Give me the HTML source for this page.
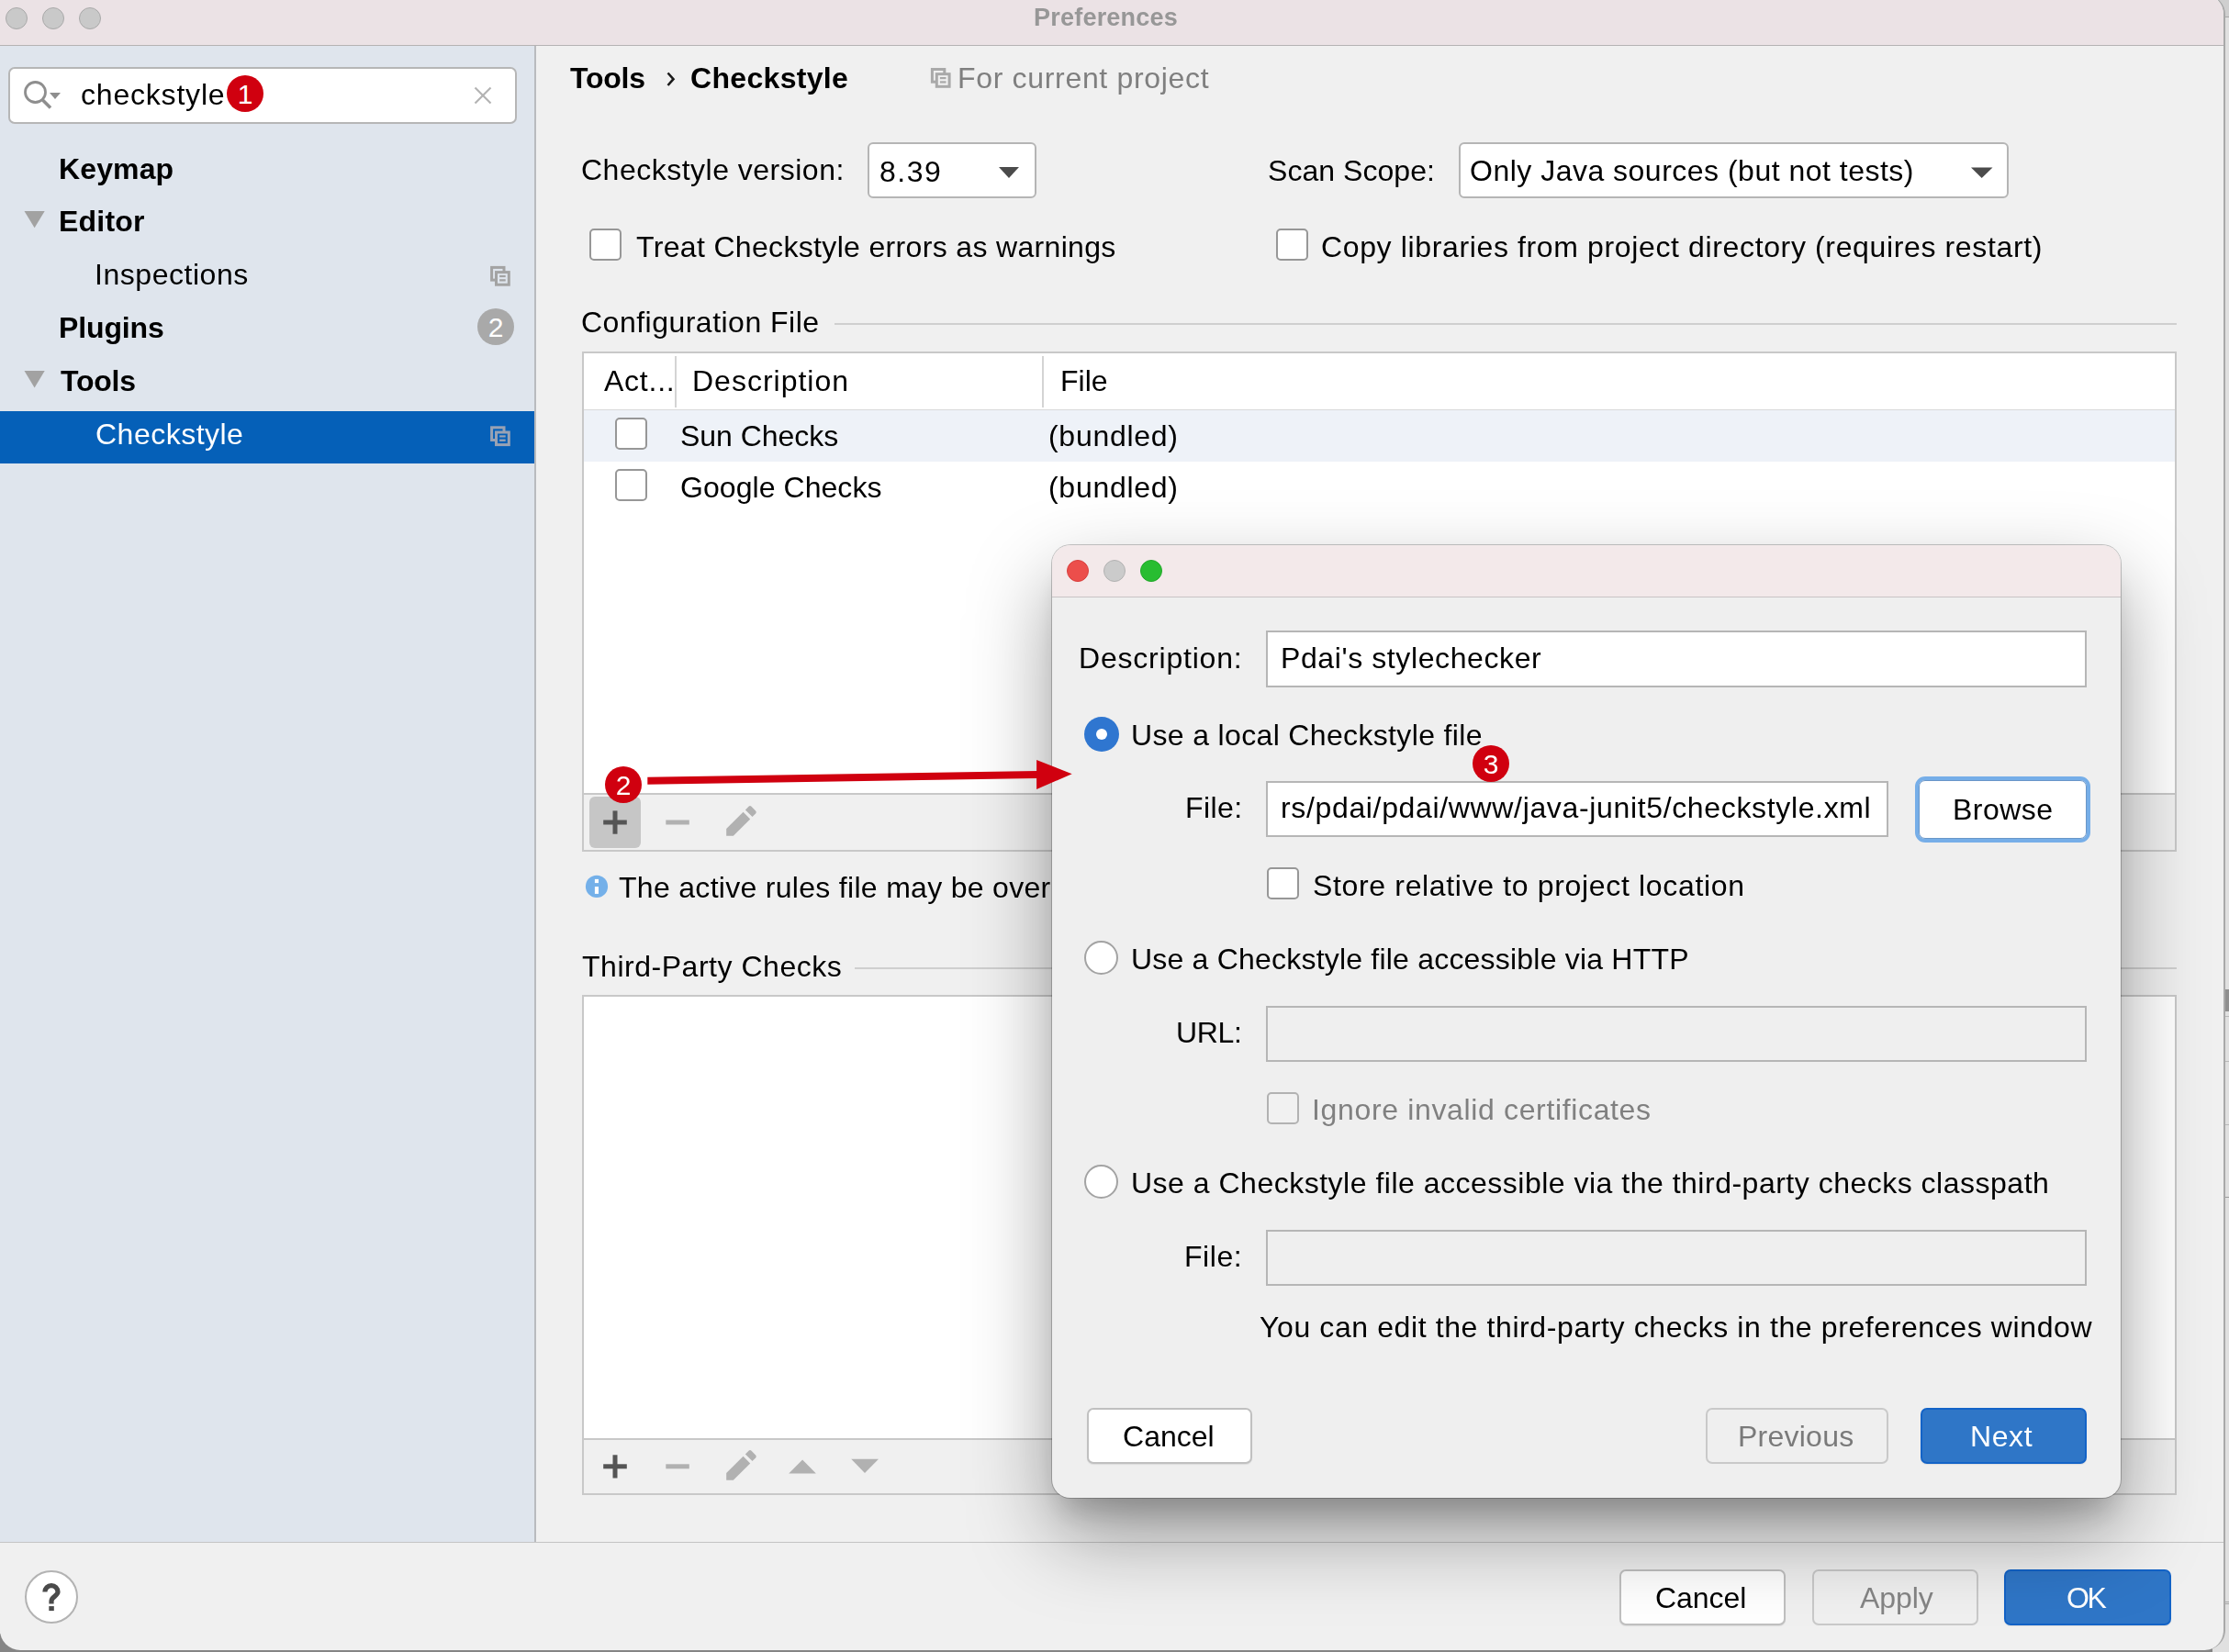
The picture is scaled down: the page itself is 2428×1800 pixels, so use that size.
<!DOCTYPE html>
<html><head><meta charset="utf-8">
<style>
*{margin:0;padding:0;box-sizing:border-box}
html,body{width:2428px;height:1800px;overflow:hidden;background:#e0e0e0}
body{position:relative;font-family:"Liberation Sans",sans-serif;color:#000}
.a{position:absolute}
.t{position:absolute;font-size:32px;line-height:32px;height:32px;white-space:nowrap;will-change:transform}
#outside{position:absolute;left:2410px;top:0;width:18px;height:1800px;background:#e0e0e0}
#win{position:absolute;left:0;top:-6px;width:2424px;height:1804px;background:#f0f0f0;border-radius:0 22px 22px 22px;overflow:hidden;border-right:2px solid #a9a9a9}
#title{position:absolute;left:0;top:-6px;width:2422px;height:56px;background:#ebe2e5;border-bottom:1px solid #b5b2b3;border-radius:0 22px 0 0}
.tl{position:absolute;width:24px;height:24px;border-radius:50%;background:#c9c9c9;border:1px solid #a9a9a9}
#side{position:absolute;left:0;top:50px;width:584px;height:1630px;background:#dfe5ed;border-right:2px solid #b9bbbe}
.field{position:absolute;background:#fff;border:2px solid #b6b6b6}
.cb{position:absolute;width:35px;height:35px;background:#fff;border:2px solid #979797;border-radius:5px}
.btn{position:absolute;background:#fff;border:2px solid #c0c0c0;border-radius:7px;box-shadow:0 1px 1px rgba(0,0,0,0.08)}
.blue{background:#2f76c7;border-color:#1363c7}
.badge{position:absolute;width:40px;height:40px;border-radius:50%;background:#d0000f;color:#fff;font-size:30px;line-height:41px;text-align:center}
.hl{position:absolute;height:2px;background:#cfcfcf}
.tbl{position:absolute;background:#fff;border:2px solid #c8c8c8}
.tb{position:absolute;left:0;width:100%;background:#f0f0f0;border-top:2px solid #c8c8c8}
.radio{position:absolute;width:37px;height:37px;border-radius:50%;background:#fff;border:2px solid #a3a3a3}
svg{position:absolute;overflow:visible}
</style></head><body>
<div id="outside"></div>
<div class="a" style="left:0;top:1780px;width:2410px;height:20px;background:#858585"></div>
<div class="a" style="left:2410px;top:0;width:18px;height:19px;background:#cfcfcf;border-bottom:1px solid #a6a6a6"></div>
<div class="a" style="left:2410px;top:1078px;width:18px;height:24px;background:#8f8f8f"></div>
<div class="a" style="left:2410px;top:1107px;width:18px;height:1px;background:#b9b9b9"></div>
<div class="a" style="left:2410px;top:1156px;width:18px;height:1px;background:#b9b9b9"></div>
<div class="a" style="left:2410px;top:1225px;width:18px;height:1px;background:#b9b9b9"></div>
<div class="a" style="left:2410px;top:1304px;width:18px;height:1px;background:#9a9a9a"></div>
<div class="a" style="left:2410px;top:1745px;width:18px;height:3px;border-top:1px solid #a8a8a8;border-bottom:1px solid #a8a8a8"></div>
<div id="win"></div>
<div id="title"></div>
<div class="tl" style="left:6px;top:8px"></div>
<div class="tl" style="left:46px;top:8px"></div>
<div class="tl" style="left:86px;top:8px"></div>

<!-- SIDEBAR -->
<div id="side"></div>
<div class="a" style="left:9px;top:73px;width:554px;height:62px;background:#fff;border:2.5px solid #b6b6b6;border-radius:7px"></div>
<svg style="left:0;top:0" width="1" height="1">
  <circle cx="38.5" cy="100.5" r="11" fill="none" stroke="#8e8e8e" stroke-width="2.8"/>
  <line x1="46.5" y1="109" x2="55" y2="117.5" stroke="#8e8e8e" stroke-width="3.6"/>
  <polygon points="54,101 66,101 60,108" fill="#8e8e8e"/>
  <line x1="517.5" y1="95.5" x2="534.5" y2="112.5" stroke="#b3b3b3" stroke-width="2.2"/>
  <line x1="534.5" y1="95.5" x2="517.5" y2="112.5" stroke="#b3b3b3" stroke-width="2.2"/>
  <polygon points="26.5,230 48.7,230 37.6,248.3" fill="#a2a2a2"/>
  <polygon points="26.5,404 48.7,404 37.6,422.6" fill="#a2a2a2"/>
</svg>
<div class="badge" style="left:247px;top:82px">1</div>
<div class="a" style="left:520px;top:336px;width:40px;height:40px;border-radius:50%;background:#a9a9a9;color:#fff;font-size:30px;line-height:41px;text-align:center">2</div>
<div class="a" style="left:0;top:448px;width:582px;height:57px;background:#0560b8"></div>
<svg style="left:0;top:0" width="1" height="1">
<g transform="translate(0,0)">
   <rect x="535.6" y="291.4" width="13.4" height="13.7" fill="none" stroke="#a3a3a3" stroke-width="3"/>
   <rect x="540.5" y="296.6" width="13.8" height="13.6" fill="#dfe5ed" stroke="#a3a3a3" stroke-width="3"/>
   <rect x="544.1" y="299.9" width="6.6" height="2.2" fill="#a3a3a3"/>
   <rect x="544.1" y="304.2" width="6.6" height="2.3" fill="#a3a3a3"/>
  </g>
<g transform="translate(0,174.4)">
   <rect x="535.6" y="291.4" width="13.4" height="13.7" fill="none" stroke="#98a2b4" stroke-width="3"/>
   <rect x="540.5" y="296.6" width="13.8" height="13.6" fill="#0560b8" stroke="#98a2b4" stroke-width="3"/>
   <rect x="544.1" y="299.9" width="6.6" height="2.2" fill="#98a2b4"/>
   <rect x="544.1" y="304.2" width="6.6" height="2.3" fill="#98a2b4"/>
  </g>
<g transform="translate(479.8,-215.9)">
   <rect x="535.6" y="291.4" width="13.4" height="13.7" fill="none" stroke="#a9a9a9" stroke-width="3"/>
   <rect x="540.5" y="296.6" width="13.8" height="13.6" fill="#f0f0f0" stroke="#a9a9a9" stroke-width="3"/>
   <rect x="544.1" y="299.9" width="6.6" height="2.2" fill="#a9a9a9"/>
   <rect x="544.1" y="304.2" width="6.6" height="2.3" fill="#a9a9a9"/>
  </g>
  <polyline points="727.5,79.5 733.5,86.2 727.5,93" fill="none" stroke="#1a1a1a" stroke-width="2.6"/>
</svg>

<!-- MAIN -->
<div class="a" style="left:945px;top:155px;width:184px;height:61px;background:#fff;border:2px solid #b5b5b5;border-radius:6px"></div>
<div class="a" style="left:1589px;top:155px;width:599px;height:61px;background:#fff;border:2px solid #b5b5b5;border-radius:6px"></div>
<svg style="left:0;top:0" width="1" height="1">
  <polygon points="1088,182 1110,182 1099,194" fill="#4b4b4b"/>
  <polygon points="2147,182.5 2170.5,182.5 2158.7,194" fill="#4b4b4b"/>
</svg>
<div class="cb" style="left:641.5px;top:249px"></div>
<div class="cb" style="left:1389.5px;top:249px"></div>
<div class="hl" style="left:909px;top:351.5px;width:1462px"></div>

<!-- CONFIG TABLE -->
<div class="tbl" style="left:634px;top:383px;width:1737px;height:545px">
  <div class="a" style="left:0;top:60.5px;width:100%;height:1.5px;background:#d9d9d9"></div>
  <div class="a" style="left:99px;top:3px;width:2px;height:56px;background:#d4d4d4"></div>
  <div class="a" style="left:499px;top:3px;width:2px;height:56px;background:#d4d4d4"></div>
  <div class="a" style="left:0;top:62px;width:100%;height:56px;background:#eef2f8"></div>
  <div class="tb" style="top:479px;height:62px"></div>
</div>
<div class="cb" style="left:669.5px;top:455px"></div>
<div class="cb" style="left:669.5px;top:511px"></div>
<div class="a" style="left:642px;top:868px;width:56px;height:56px;background:#c6c6c6;border-radius:6px"></div>
<svg style="left:0;top:0" width="1" height="1">
  <g fill="#555555">
   <rect x="657.2" y="893.5" width="25.6" height="5"/>
   <rect x="667.5" y="883.4" width="5" height="25.3"/>
  </g>
  <g fill="#b1b1b1">
   <rect x="725.3" y="893.5" width="25.5" height="5"/>
   <path d="M791.2,910.8 L791.2,903.1 L809.55,884.75 L817.2,892.4 L798.8,910.8 Z"/>
   <path d="M811.9,882.4 L815.5,878.8 Q817,877.3 818.5,878.8 L823.1,883.4 Q824.6,884.9 823.1,886.4 L819.5,890 Z"/>
  </g>
  <circle cx="650" cy="965.9" r="12.1" fill="#74b0e9"/>
  <rect x="647.9" y="966.1" width="4.1" height="7.8" fill="#fff"/>
  <rect x="647.9" y="957.9" width="4.1" height="4.2" fill="#fff"/>
</svg>
<div class="hl" style="left:931px;top:1054px;width:1440px"></div>

<!-- THIRD PARTY TABLE -->
<div class="tbl" style="left:634px;top:1084px;width:1737px;height:545px">
  <div class="tb" style="top:481px;height:60px"></div>
</div>
<svg style="left:0;top:0" width="1" height="1">
  <g fill="#555555">
   <rect x="657.2" y="1595.3" width="25.6" height="5"/>
   <rect x="667.5" y="1585.3" width="5" height="25.2"/>
  </g>
  <g fill="#b1b1b1">
   <rect x="725.3" y="1595.3" width="25.5" height="5"/>
   <path d="M791.2,1612.8 L791.2,1605.1 L809.55,1586.75 L817.2,1594.4 L798.8,1612.8 Z"/>
   <path d="M811.9,1584.4 L815.5,1580.8 Q817,1579.3 818.5,1580.8 L823.1,1585.4 Q824.6,1586.9 823.1,1588.4 L819.5,1592 Z"/>
   <polygon points="859.2,1605.5 888.9,1605.5 874.1,1590.6"/>
   <polygon points="927.2,1589.8 957,1589.8 942,1605.1"/>
  </g>
</svg>

<!-- BOTTOM BAR -->
<div class="a" style="left:0;top:1680px;width:2422px;height:1px;background:#c4c4c4"></div>
<div class="a" style="left:27px;top:1711px;width:58px;height:58px;border-radius:50%;background:#fff;border:2px solid #b3b3b3"></div>
<svg style="left:0;top:0" width="1" height="1">
  <path d="M48.9,1734.6 A7.05,7.05 0 1 1 63,1734.6 C63,1738.8 56,1740 56,1744.5 L56,1747.4" fill="none" stroke="#4a4a4a" stroke-width="5.2"/>
  <rect x="53.3" y="1750.1" width="5.5" height="5" fill="#4a4a4a"/>
</svg>
<div class="btn" style="left:1764px;top:1710px;width:181px;height:61px"></div>
<div class="btn" style="left:1974px;top:1710px;width:181px;height:61px;background:transparent;border-color:#c9c9c9;box-shadow:none"></div>
<div class="btn blue" style="left:2183px;top:1710px;width:182px;height:61px"></div>

<div class="t" style="left:1125.8px;top:2.8px;font-size:27px;letter-spacing:0.220px;color:#979797;font-weight:bold">Preferences</div>
<div class="t" style="left:87.8px;top:87.0px;font-size:32px;letter-spacing:0.800px;color:#000">checkstyle</div>
<div class="t" style="left:63.7px;top:167.5px;font-size:32px;letter-spacing:0.120px;color:#000;font-weight:bold">Keymap</div>
<div class="t" style="left:63.7px;top:225.1px;font-size:32px;letter-spacing:0.220px;color:#000;font-weight:bold">Editor</div>
<div class="t" style="left:103.0px;top:283.1px;font-size:32px;letter-spacing:0.540px;color:#000">Inspections</div>
<div class="t" style="left:63.8px;top:341.4px;font-size:32px;letter-spacing:-0.133px;color:#000;font-weight:bold">Plugins</div>
<div class="t" style="left:65.8px;top:398.6px;font-size:32px;letter-spacing:-0.250px;color:#000;font-weight:bold">Tools</div>
<div class="t" style="left:104.0px;top:457.2px;font-size:32px;letter-spacing:0.489px;color:#fff">Checkstyle</div>
<div class="t" style="left:620.9px;top:69.1px;font-size:32px;letter-spacing:-0.225px;color:#000;font-weight:bold">Tools</div>
<div class="t" style="left:752.1px;top:69.0px;font-size:32px;letter-spacing:0.322px;color:#000;font-weight:bold">Checkstyle</div>
<div class="t" style="left:1042.8px;top:69.0px;font-size:32px;letter-spacing:0.678px;color:#7f7f7f">For current project</div>
<div class="t" style="left:633.4px;top:169.3px;font-size:32px;letter-spacing:0.494px;color:#000">Checkstyle version:</div>
<div class="t" style="left:958.4px;top:170.5px;font-size:32px;letter-spacing:1.533px;color:#000">8.39</div>
<div class="t" style="left:1380.9px;top:170.0px;font-size:32px;letter-spacing:0.040px;color:#000">Scan Scope:</div>
<div class="t" style="left:1600.9px;top:170.0px;font-size:32px;letter-spacing:0.491px;color:#000">Only Java sources (but not tests)</div>
<div class="t" style="left:692.6px;top:253.3px;font-size:32px;letter-spacing:0.335px;color:#000">Treat Checkstyle errors as warnings</div>
<div class="t" style="left:1438.9px;top:253.2px;font-size:32px;letter-spacing:0.635px;color:#000">Copy libraries from project directory (requires restart)</div>
<div class="t" style="left:633.2px;top:334.9px;font-size:32px;letter-spacing:0.488px;color:#000">Configuration File</div>
<div class="t" style="left:657.5px;top:399.3px;font-size:32px;letter-spacing:0.760px;color:#000">Act...</div>
<div class="t" style="left:754.0px;top:399.3px;font-size:32px;letter-spacing:1.000px;color:#000">Description</div>
<div class="t" style="left:1154.5px;top:399.3px;font-size:32px;letter-spacing:0.033px;color:#000">File</div>
<div class="t" style="left:740.9px;top:459.0px;font-size:32px;letter-spacing:-0.033px;color:#000">Sun Checks</div>
<div class="t" style="left:1142.3px;top:459.0px;font-size:32px;letter-spacing:0.713px;color:#000">(bundled)</div>
<div class="t" style="left:740.9px;top:514.9px;font-size:32px;letter-spacing:0.058px;color:#000">Google Checks</div>
<div class="t" style="left:1142.3px;top:514.9px;font-size:32px;letter-spacing:0.713px;color:#000">(bundled)</div>
<div class="t" style="left:674.3px;top:950.8px;font-size:32px;letter-spacing:0.300px;color:#000">The active rules file may be over</div>
<div class="t" style="left:634.1px;top:1036.7px;font-size:32px;letter-spacing:0.524px;color:#000">Third-Party Checks</div>
<div class="t" style="left:1803.4px;top:1725.0px;font-size:32px;letter-spacing:-0.060px;color:#000">Cancel</div>
<div class="t" style="left:2025.5px;top:1725.0px;font-size:32px;letter-spacing:-0.100px;color:#858585">Apply</div>
<div class="t" style="left:2251.0px;top:1725.0px;font-size:32px;letter-spacing:-2.400px;color:#fff">OK</div>

<!-- DIALOG -->
<div class="a" style="left:1146px;top:594px;width:1164px;height:1038px;border-radius:20px;background:#efefef;box-shadow:0 0 0 1px rgba(0,0,0,0.22),0 40px 90px rgba(0,0,0,0.38),0 24px 30px -10px rgba(0,0,0,0.16);overflow:hidden">
  <div class="a" style="left:0;top:0;width:100%;height:57px;background:#f3e9ea;border-bottom:1px solid #c9c4c5"></div>
</div>
<div class="a" style="left:1162px;top:610px;width:24px;height:24px;border-radius:50%;background:#ec4e4b;border:1px solid #d8403e"></div>
<div class="a" style="left:1202px;top:610px;width:24px;height:24px;border-radius:50%;background:#cbcbcb;border:1px solid #b2b2b2"></div>
<div class="a" style="left:1242px;top:610px;width:24px;height:24px;border-radius:50%;background:#28bd31;border:1px solid #22a82a"></div>

<div class="field" style="left:1379px;top:687px;width:894px;height:62px"></div>
<div class="a" style="left:1181px;top:781px;width:38px;height:38px;border-radius:50%;background:#2f76d0"></div>
<div class="a" style="left:1194px;top:793.6px;width:12px;height:12px;border-radius:50%;background:#fff"></div>
<div class="field" style="left:1379px;top:851px;width:678px;height:61px"></div>
<div class="a" style="left:2086px;top:846px;width:191px;height:72px;border-radius:11px;border:4.5px solid #76aee8"></div>
<div class="a" style="left:2090px;top:850px;width:183px;height:64px;border-radius:7px;background:#fff;border:1px solid #6a96c8"></div>
<div class="cb" style="left:1380px;top:945px"></div>
<div class="radio" style="left:1181px;top:1025px"></div>
<div class="field" style="left:1379px;top:1096px;width:894px;height:61px;background:#efefef"></div>
<div class="cb" style="left:1380px;top:1190px;background:#f1f1f1;border-color:#b2b2b2"></div>
<div class="radio" style="left:1181px;top:1269px"></div>
<div class="field" style="left:1379px;top:1340px;width:894px;height:61px;background:#efefef"></div>
<div class="btn" style="left:1184px;top:1534px;width:180px;height:61px"></div>
<div class="btn" style="left:1858px;top:1534px;width:199px;height:61px;background:transparent;border-color:#c9c9c9;box-shadow:none"></div>
<div class="btn blue" style="left:2092px;top:1534px;width:181px;height:61px"></div>

<div class="t" style="left:1174.9px;top:700.5px;font-size:32px;letter-spacing:0.791px;color:#000">Description:</div>
<div class="t" style="left:1395.2px;top:700.5px;font-size:32px;letter-spacing:0.600px;color:#000">Pdai's stylechecker</div>
<div class="t" style="left:1231.6px;top:784.5px;font-size:32px;letter-spacing:0.346px;color:#000">Use a local Checkstyle file</div>
<div class="t" style="left:1290.6px;top:864.1px;font-size:32px;letter-spacing:0.400px;color:#000">File:</div>
<div class="t" style="left:1395.0px;top:864.1px;font-size:32px;letter-spacing:0.652px;color:#000">rs/pdai/pdai/www/java-junit5/checkstyle.xml</div>
<div class="t" style="left:2126.6px;top:866.4px;font-size:32px;letter-spacing:0.460px;color:#000">Browse</div>
<div class="t" style="left:1429.5px;top:949.3px;font-size:32px;letter-spacing:0.658px;color:#000">Store relative to project location</div>
<div class="t" style="left:1231.6px;top:1028.5px;font-size:32px;letter-spacing:0.205px;color:#000">Use a Checkstyle file accessible via HTTP</div>
<div class="t" style="left:1280.9px;top:1108.5px;font-size:32px;letter-spacing:-0.367px;color:#000">URL:</div>
<div class="t" style="left:1428.5px;top:1192.7px;font-size:32px;letter-spacing:0.650px;color:#808080">Ignore invalid certificates</div>
<div class="t" style="left:1231.6px;top:1272.7px;font-size:32px;letter-spacing:0.501px;color:#000">Use a Checkstyle file accessible via the third-party checks classpath</div>
<div class="t" style="left:1290.0px;top:1353.4px;font-size:32px;letter-spacing:0.550px;color:#000">File:</div>
<div class="t" style="left:1372.0px;top:1430.3px;font-size:32px;letter-spacing:0.603px;color:#000">You can edit the third-party checks in the preferences window</div>
<div class="t" style="left:1223.4px;top:1549.0px;font-size:32px;letter-spacing:0.020px;color:#000">Cancel</div>
<div class="t" style="left:1892.8px;top:1549.0px;font-size:32px;letter-spacing:0.243px;color:#7a7a7a">Previous</div>
<div class="t" style="left:2146.4px;top:1549.0px;font-size:32px;letter-spacing:0.600px;color:#fff">Next</div>

<!-- ANNOTATIONS -->
<svg style="left:0;top:0" width="1" height="1">
  <polygon points="705.3,846.7 1130,840 1130,848 705.3,854.8" fill="#d0000f"/>
  <polygon points="1129.1,827.9 1167.7,843.3 1129.1,859.9" fill="#d0000f"/>
</svg>
<div class="badge" style="left:659px;top:835px">2</div>
<div class="badge" style="left:1604px;top:812px">3</div>
</body></html>
